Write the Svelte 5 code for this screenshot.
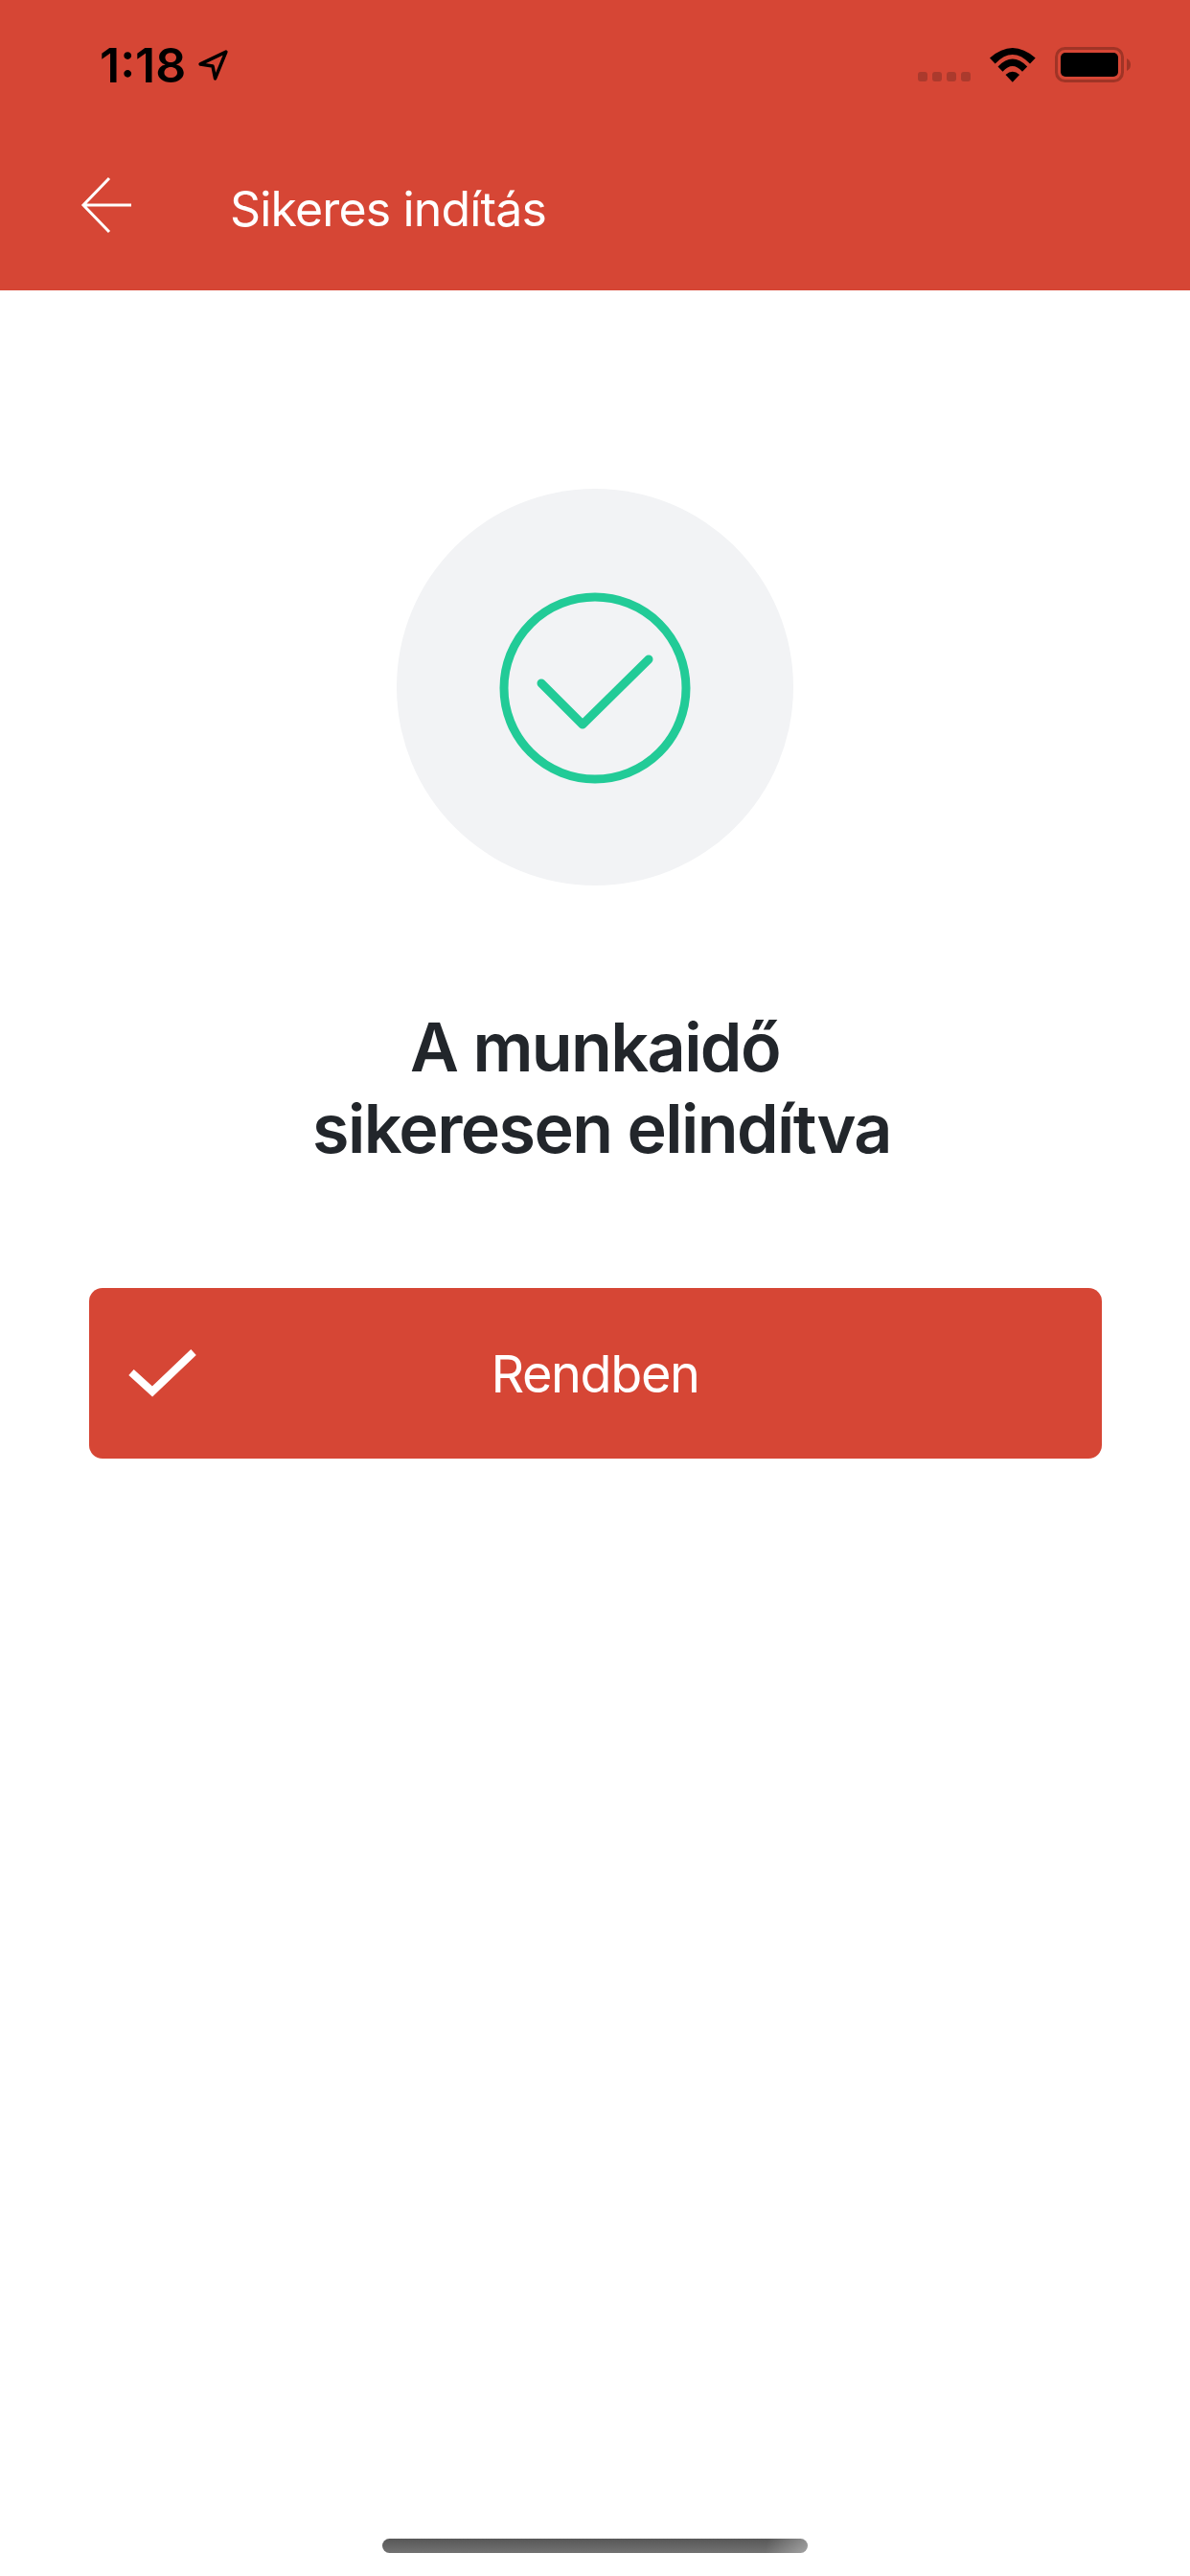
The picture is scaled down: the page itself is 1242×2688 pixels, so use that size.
<script>
  const title = 'Sikeres indítás';
  const lines = ['A munkaidő', 'sikeresen elindítva'];
</script>

<div class="page">
  <header class="top">
    <div class="status">
      <div class="clock">
        <span class="time">1:18</span>
        <svg class="loc" width="33" height="33" viewBox="0 0 32 32">
          <path d="M29 2 L3 14.5 L15.5 16.5 L18 29 Z" fill="none" stroke="#000" stroke-width="3.4" stroke-linejoin="round" />
        </svg>
      </div>
      <div class="indicators">
        <div class="signal">
          {#each [0, 1, 2, 3] as dot}
            <span class="dot"></span>
          {/each}
        </div>
        <svg class="wifi" width="48" height="36" viewBox="0 0 48 36">
          <path d="M0 10.5 Q23.8 -10.5 47.7 10.5 L42 16.5 Q23.8 -2.4 5.6 16.5 Z" />
          <path d="M8.5 19.5 Q23.8 3.6 39.2 19.5 L34 24.8 Q23.8 13 13.5 24.8 Z" />
          <path d="M16.5 28 Q23.8 21.4 31.1 28 L23.8 35.7 Z" />
        </svg>
        <svg class="battery" width="80" height="38" viewBox="0 0 80 38">
          <rect x="1.5" y="1.5" width="69" height="34" rx="9" fill="none" stroke="#a03426" stroke-width="3" />
          <rect x="6" y="6" width="60" height="25" rx="5" fill="#000" />
          <path d="M75 12 Q79 14 79 18.5 Q79 23 75 25 Z" fill="#a03426" />
        </svg>
      </div>
    </div>
    <nav class="bar">
      <svg class="back" width="54" height="60" viewBox="0 0 54 60">
        <path d="M30 2 L3 30 L30 58 M3 30 H53" fill="none" stroke="#fff" stroke-width="3" />
      </svg>
      <span class="title">{title}</span>
    </nav>
  </header>

  <main class="content">
    <div class="badge">
      <svg class="tick" width="200" height="200" viewBox="0 0 200 200">
        <circle cx="100" cy="100" r="95" fill="none" stroke="#22cb97" stroke-width="9" />
        <path d="M44 95 L87 138 L156 70" fill="none" stroke="#22cb97" stroke-width="9" stroke-linecap="round" stroke-linejoin="round" />
      </svg>
    </div>

    <h1>
      {#each lines as line}
        <span>{line}</span>
      {/each}
    </h1>

    <button class="ok">
      <svg width="72" height="56" viewBox="0 0 72 56">
        <path d="M3 27 L25 47 L68 6" fill="none" stroke="#fff" stroke-width="8" />
      </svg>
      <span>Rendben</span>
    </button>
  </main>

  <div class="home"></div>
</div>

<style>
  :global(body) {
    margin: 0;
    background: #fff;
  }

  .page {
    width: 1242px;
    height: 2688px;
    display: flex;
    flex-direction: column;
    font-family: Inter, "Liberation Sans", sans-serif;
    background: #fff;
  }

  .top {
    height: 303px;
    background: #d64635;
    box-sizing: border-box;
    flex: none;
  }

  .status {
    height: 132px;
    box-sizing: border-box;
    padding: 49px 61px 0 104px;
    display: flex;
    justify-content: space-between;
    align-items: flex-start;
  }

  .clock {
    display: flex;
    align-items: center;
    gap: 12px;
  }

  .time {
    font-size: 50px;
    line-height: 38px;
    font-weight: 600;
    color: #000;
  }

  .indicators {
    display: flex;
    align-items: flex-end;
    gap: 20px;
    height: 37px;
  }

  .signal {
    display: flex;
    gap: 5px;
    margin-bottom: 1px;
  }

  .dot {
    width: 10px;
    height: 10px;
    border-radius: 3px;
    background: #ab3a2d;
  }

  .wifi {
    fill: #000;
  }

  .battery {
    margin-bottom: -1px;
  }

  .bar {
    display: flex;
    align-items: center;
    gap: 102px;
    padding: 48px 0 0 84px;
  }

  .title {
    margin-top: 8px;
    font-size: 50px;
    line-height: 60px;
    font-weight: 400;
    color: #fff;
    letter-spacing: -0.85px;
  }

  .content {
    display: flex;
    flex-direction: column;
    align-items: center;
    padding-top: 207px;
  }

  .badge {
    width: 414px;
    height: 414px;
    border-radius: 50%;
    background: #f2f3f5;
    display: flex;
    align-items: center;
    justify-content: center;
  }

  .tick {
    margin-top: 1px;
  }

  h1 {
    margin: 126px 0 0;
    font-size: 70px;
    line-height: 85px;
    font-weight: 600;
    color: #22262b;
    text-align: center;
    letter-spacing: -1.6px;
  }

  h1 span {
    display: block;
  }

  h1 span + span {
    padding-left: 14px;
  }

  .ok {
    margin-top: 124px;
    width: 1057px;
    height: 178px;
    border: 0;
    border-radius: 14px;
    background: #d64635;
    color: #fff;
    font: inherit;
    font-size: 54px;
    letter-spacing: -1.4px;
    display: grid;
    grid-template-columns: 1fr auto 1fr;
    align-items: center;
    padding: 0 0 0 41px;
  }

  .ok span {
    margin-left: -41px;
  }

  .home {
    margin: auto 0 24px 399px;
    width: 444px;
    height: 15px;
    border-radius: 8px;
    background: linear-gradient(100deg, transparent 90%, rgba(255, 255, 255, 0.35)), linear-gradient(#575757, #727272);
  }
</style>
